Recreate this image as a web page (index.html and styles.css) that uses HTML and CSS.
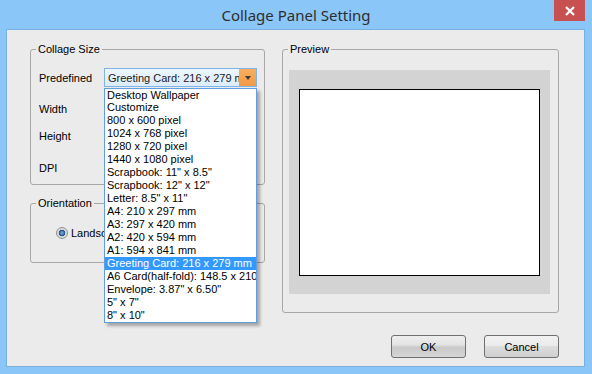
FILE: index.html
```html
<!DOCTYPE html>
<html>
<head>
<meta charset="utf-8">
<link rel="stylesheet" href="styles.css">
</head>
<body>
<div class="window">
  <div class="titlebar">
    <span class="title">Collage Panel Setting</span>
    <button class="close" aria-label="Close">
      <svg width="10" height="10" viewBox="0 0 10 10"><path d="M1 1 L9 9 M9 1 L1 9" stroke="#fff" stroke-width="2.2" fill="none"/></svg>
    </button>
  </div>
  <div class="client">
    <div class="main">
      <div class="left-col">
        <div class="group size-group">
          <div class="legend">Collage Size</div>
          <div class="rows">
            <div class="row">
              <span class="lbl">Predefined</span>
              <div class="combo">
                <span class="combo-text">Greeting Card: 216 x 279 mm</span>
                <span class="combo-btn"><span class="tri"></span></span>
                <ul class="droplist">
                  <li>Desktop Wallpaper</li>
                  <li>Customize</li>
                  <li>800 x 600 pixel</li>
                  <li>1024 x 768 pixel</li>
                  <li>1280 x 720 pixel</li>
                  <li>1440 x 1080 pixel</li>
                  <li>Scrapbook: 11" x 8.5"</li>
                  <li>Scrapbook: 12" x 12"</li>
                  <li>Letter: 8.5" x 11"</li>
                  <li>A4: 210 x 297 mm</li>
                  <li>A3: 297 x 420 mm</li>
                  <li>A2: 420 x 594 mm</li>
                  <li>A1: 594 x 841 mm</li>
                  <li class="sel">Greeting Card: 216 x 279 mm</li>
                  <li>A6 Card(half-fold): 148.5 x 210 mm</li>
                  <li>Envelope: 3.87" x 6.50"</li>
                  <li>5" x 7"</li>
                  <li>8" x 10"</li>
                </ul>
              </div>
            </div>
            <div class="row row-width"><span class="lbl">Width</span></div>
            <div class="row row-height"><span class="lbl">Height</span></div>
            <div class="row row-dpi"><span class="lbl">DPI</span></div>
          </div>
        </div>
        <div class="group orient-group">
          <div class="legend">Orientation</div>
          <div class="radio-row"><span class="radio"></span><span class="radio-label">Landscape</span></div>
        </div>
      </div>
      <div class="group preview-group">
        <div class="legend">Preview</div>
        <div class="preview-bg"><div class="paper"></div></div>
      </div>
    </div>
    <div class="buttons">
      <button class="btn btn-ok">OK</button>
      <button class="btn">Cancel</button>
    </div>
  </div>
</div>
</body>
</html>
```
FILE: styles.css
```css
* { box-sizing: border-box; margin: 0; padding: 0; }
body {
  margin: 0;
  width: 592px;
  height: 374px;
  overflow: hidden;
  font-family: "Liberation Sans", Arial, sans-serif;
  font-size: 11px;
  color: #000;
}
.window {
  width: 592px;
  height: 374px;
  background: #8bc6f8;
  display: flex;
  flex-direction: column;
  position: relative;
}
.titlebar {
  height: 30px;
  flex: none;
  display: flex;
  justify-content: center;
  align-items: center;
}
.title {
  font-family: "Noto Sans", sans-serif;
  font-size: 15px;
  color: #2e2e2e;
  margin-top: -1px;
}
.close {
  position: absolute;
  right: 7px;
  top: 0;
  width: 31px;
  height: 21px;
  background: #c75050;
  border: none;
  display: flex;
  align-items: center;
  justify-content: center;
}
.close svg { display: block; }
.client {
  flex: 1;
  margin: 0 8px 8px 7px;
  background: #ebebeb;
  box-shadow: 0 0 0 1px #79b0e2;
  padding: 19px 25px 8px 23px;
  display: flex;
  flex-direction: column;
}
.main {
  display: flex;
  gap: 17px;
}
.left-col {
  width: 235px;
  display: flex;
  flex-direction: column;
  gap: 18px;
}
.group {
  border: 1px solid #a8a8a8;
  border-radius: 3px;
}
.legend {
  display: table;
  margin: -7px 0 -6px 5px;
  padding: 0 2px;
  height: 13px;
  line-height: 13px;
  background: #ebebeb;
}
.size-group { height: 136px; }
.orient-group { height: 60px; }
.preview-group { width: 277px; height: 264px; }

.rows { padding: 18px 0 0 8px; }
.row {
  display: flex;
  align-items: center;
  height: 19px;
}
.row-width { margin-top: 12px; }
.row-height { margin-top: 8px; }
.row-dpi { margin-top: 13px; }
.lbl { width: 65px; }

.combo {
  position: relative;
  width: 153px;
  height: 19px;
  border: 1px solid #7eb4ea;
  background: linear-gradient(#eef6fd, #dcecfb);
  display: flex;
  align-items: center;
}
.combo-text {
  flex: 1;
  padding-left: 3px;
  white-space: nowrap;
  overflow: hidden;
  color: #1a1a1a;
}
.combo-btn {
  width: 17px;
  height: 17px;
  flex: none;
  background: linear-gradient(#f8ae5f, #f29a45);
  display: flex;
  align-items: center;
  justify-content: center;
}
.tri {
  width: 0;
  height: 0;
  border-left: 3.5px solid transparent;
  border-right: 3.5px solid transparent;
  border-top: 4px solid #3a3a3a;
}
.droplist {
  position: absolute;
  z-index: 5;
  top: 19px;
  left: -1px;
  width: 153px;
  height: 235px;
  list-style: none;
  background: #fff;
  border: 1px solid #5f9ee0;
  box-shadow: 3px 3px 3px rgba(0, 0, 0, 0.3);
  overflow: hidden;
}
.droplist li {
  height: 13px;
  line-height: 13px;
  padding-left: 2px;
  white-space: nowrap;
}
.droplist li:first-child { height: 12px; line-height: 12px; }
.droplist li.sel { background: #3399ff; color: #fff; }

.radio-row {
  display: flex;
  align-items: center;
  padding: 23px 0 0 25px;
  gap: 3px;
}
.radio {
  width: 12px;
  height: 12px;
  border-radius: 50%;
  border: 1px solid #8e8f8f;
  background: radial-gradient(circle, #7fb0de 0, #2f64a0 2.5px, #1f4f86 3px, #d6d6d6 3.6px, #f2f2f2 100%);
}

.preview-bg {
  margin: 20px 8px 0 6px;
  height: 224px;
  background: #d3d3d3;
  padding: 19px 10px 0 10px;
}
.paper {
  height: 187px;
  background: #fff;
  border: 1px solid #000;
}

.buttons {
  margin-top: 22px;
  display: flex;
  justify-content: flex-end;
  gap: 18px;
}
.btn {
  width: 75px;
  height: 23px;
  border: 1px solid #707070;
  border-radius: 3px;
  font-family: "Liberation Sans", Arial, sans-serif;
  font-size: 11px;
  color: #000;
  background: linear-gradient(#f2f2f2 0%, #ebebeb 45%, #dddddd 50%, #cfcfcf 100%);
}
.btn-ok {
  background: linear-gradient(#eeeeee 0%, #e4e4e4 40%, #c9c9c9 55%, #d6d6d6 100%);
}
```
